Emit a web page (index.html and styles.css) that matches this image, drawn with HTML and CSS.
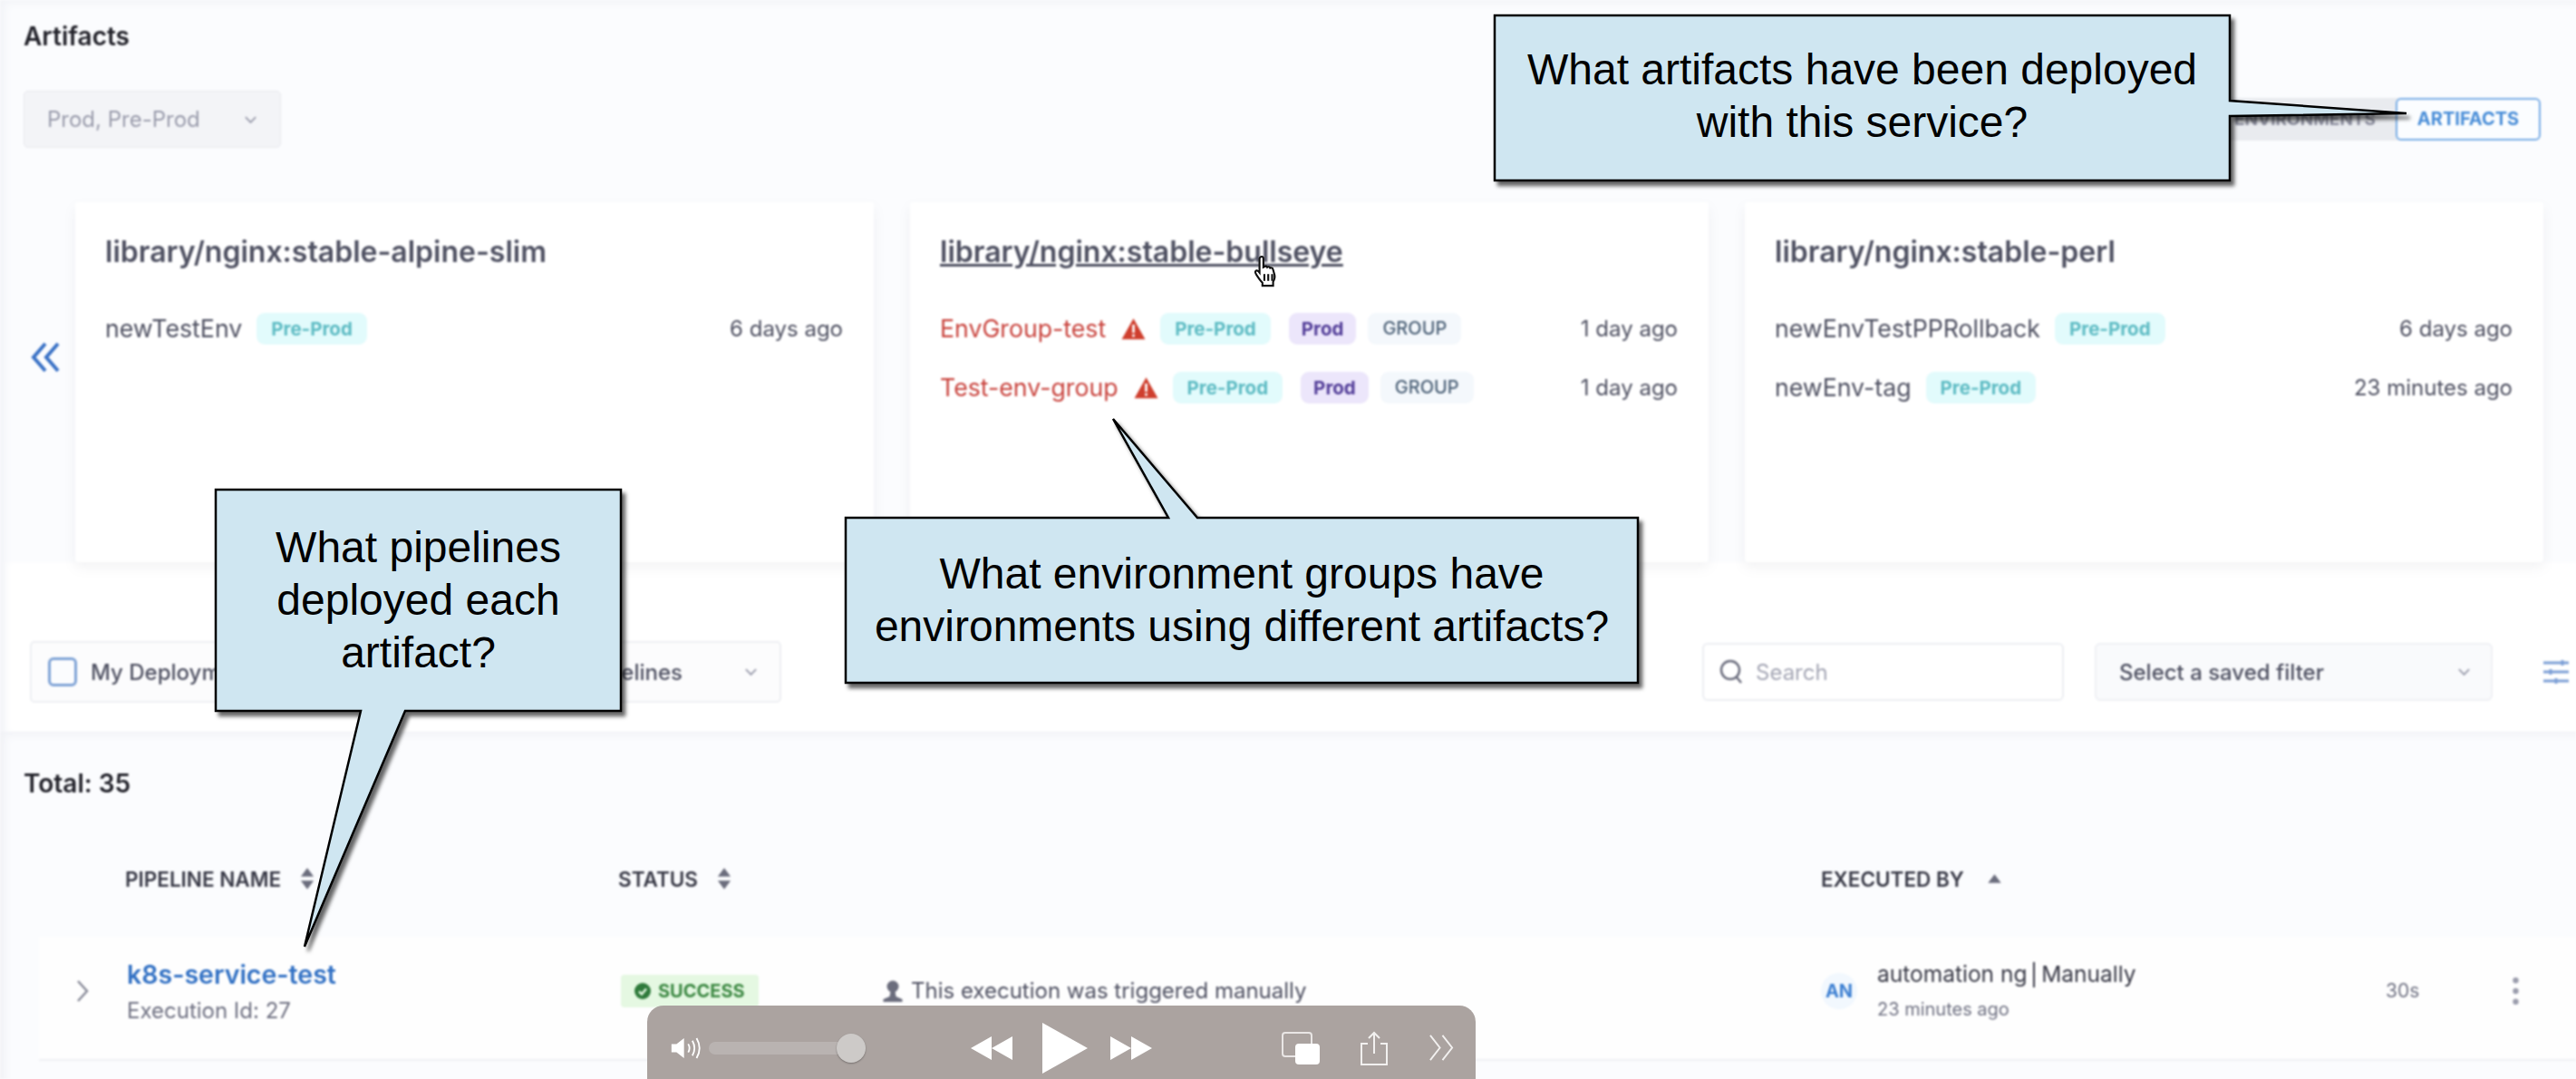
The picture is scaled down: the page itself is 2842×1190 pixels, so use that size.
FILE: index.html
```html
<!DOCTYPE html>
<html lang="en">
<head>
    <meta charset="UTF-8">
    <meta name="viewport" content="width=device-width, initial-scale=1.0">
    <title>Service artifacts</title>
    <link rel="stylesheet" href="styles.css">
</head>
<body>
    <div class="screen">
        <div class="app">
            <section class="artifacts">
                <h2 class="section-title">Artifacts</h2>
                <div class="tool-row">
                    <div class="env-select">
                        <span>Prod, Pre-Prod</span>
                        <svg class="chevron-down" viewBox="0 0 16 10"><path d="M2 2l6 6 6-6"/></svg>
                    </div>
                    <div class="view-toggle">
                        <span class="toggle-off">ENVIRONMENTS</span>
                        <span class="toggle-on">ARTIFACTS</span>
                    </div>
                </div>
                <div class="cards-row">
                    <svg class="page-back" viewBox="0 0 34 34"><path d="M17 2L4 17l13 15M31 2L18 17l13 15"/></svg>
                    <div class="cards">
                        <article class="card">
                            <h3 class="card-title">library/nginx:stable-alpine-slim</h3>
                            <div class="env-row">
                                <span class="env-name">newTestEnv</span>
                                <span class="badge badge-preprod">Pre-Prod</span>
                                <span class="env-time">6 days ago</span>
                            </div>
                        </article>
                        <article class="card">
                            <h3 class="card-title card-title-hover">library/nginx:stable-bullseye</h3>
                            <div class="env-row">
                                <span class="env-name env-name-warn">EnvGroup-test</span>
                                <svg class="warn-icon" viewBox="0 0 24 22"><path d="M12 1L23.500 21.500H.5z"/><rect class="warn-mark" x="10.800" y="7" width="2.400" height="8"/><rect class="warn-mark" x="10.800" y="16.500" width="2.400" height="2.500"/></svg>
                                <span class="badge badge-preprod">Pre-Prod</span>
                                <span class="badge badge-prod">Prod</span>
                                <span class="badge badge-group">GROUP</span>
                                <span class="env-time">1 day ago</span>
                            </div>
                            <div class="env-row">
                                <span class="env-name env-name-warn">Test-env-group</span>
                                <svg class="warn-icon" viewBox="0 0 24 22"><path d="M12 1L23.500 21.500H.5z"/><rect class="warn-mark" x="10.800" y="7" width="2.400" height="8"/><rect class="warn-mark" x="10.800" y="16.500" width="2.400" height="2.500"/></svg>
                                <span class="badge badge-preprod">Pre-Prod</span>
                                <span class="badge badge-prod">Prod</span>
                                <span class="badge badge-group">GROUP</span>
                                <span class="env-time">1 day ago</span>
                            </div>
                        </article>
                        <article class="card">
                            <h3 class="card-title">library/nginx:stable-perl</h3>
                            <div class="env-row">
                                <span class="env-name">newEnvTestPPRollback</span>
                                <span class="badge badge-preprod">Pre-Prod</span>
                                <span class="env-time">6 days ago</span>
                            </div>
                            <div class="env-row">
                                <span class="env-name">newEnv-tag</span>
                                <span class="badge badge-preprod">Pre-Prod</span>
                                <span class="env-time">23 minutes ago</span>
                            </div>
                        </article>
                    </div>
                </div>
            </section>

            <section class="filters">
                <div class="filter-box">
                    <span class="checkbox"></span>
                    <span class="filter-label">My Deployments</span>
                    <span class="filter-pipelines">All Pipelines</span>
                    <svg class="chevron-down" viewBox="0 0 16 10"><path d="M2 2l6 6 6-6"/></svg>
                </div>
                <div class="search-box">
                    <svg class="search-icon" viewBox="0 0 26 28"><circle cx="12" cy="12" r="10"/><path d="M19 20l5 6"/></svg>
                    <span>Search</span>
                </div>
                <div class="saved-filter">
                    <span>Select a saved filter</span>
                    <svg class="chevron-down" viewBox="0 0 16 10"><path d="M2 2l6 6 6-6"/></svg>
                </div>
                <svg class="filter-icon" viewBox="0 0 30 26"><path d="M1 3h28M1 13h28M1 23h28M22 0v6M9 10v6M15 20v6"/></svg>
            </section>

            <section class="results">
                <div class="total">Total: 35</div>
                <div class="table-head">
                    <span></span>
                    <span class="head-cell">PIPELINE NAME <svg class="sort-icon" viewBox="0 0 14 22"><path d="M7 1l6 8H1zM7 21l6-8H1z"/></svg></span>
                    <span class="head-cell">STATUS <svg class="sort-icon" viewBox="0 0 14 22"><path d="M7 1l6 8H1zM7 21l6-8H1z"/></svg></span>
                    <span></span>
                    <span class="head-cell">EXECUTED BY <svg class="sort-up" viewBox="0 0 14 10"><path d="M7 1l6 8H1z"/></svg></span>
                </div>
                <div class="run-row">
                    <svg class="row-expand" viewBox="0 0 14 26"><path d="M2 2l10 11L2 24"/></svg>
                    <div>
                        <div class="run-name">k8s-service-test</div>
                        <div class="run-id">Execution Id: 27</div>
                    </div>
                    <div>
                        <span class="status-badge">
                            <svg class="status-icon" viewBox="0 0 18 18"><circle cx="9" cy="9" r="9"/><path d="M5 9.500l3 3 5-6"/></svg>
                            SUCCESS
                        </span>
                    </div>
                    <div class="trigger">
                        <svg class="user-icon" viewBox="0 0 24 26"><circle cx="12" cy="8" r="6.500"/><path d="M9.500 13h5l1 6 7 3v3H1.500v-3l7-3z"/></svg>
                        This execution was triggered manually
                    </div>
                    <div class="executor">
                        <span class="avatar">AN</span>
                        <div>
                            <div class="executor-name">automation ng <span class="executor-sep"></span> Manually</div>
                            <div class="executor-time">23 minutes ago</div>
                        </div>
                    </div>
                    <div class="run-duration">30s</div>
                    <svg class="run-menu" viewBox="0 0 6 30"><circle cx="3" cy="4" r="3"/><circle cx="3" cy="15" r="3"/><circle cx="3" cy="26" r="3"/></svg>
                </div>
            </section>
        </div>

        <svg class="cursor-hand" viewBox="0 0 28 34"><path d="M9 2.500c1.500-1 3 0 3 1.500v9l1-.5c1-1 2.500-.5 3 .5 1-.8 2.500-.5 3 .7 1-.5 2.500 0 2.800 1.300l1.700 6c.7 3-.3 5-1.500 7v4H11v-3c-2-2-4-5-6-8-1-1.500-2-3-1-4 1-1.200 2.500-.5 4 1.500V4c0-.5.500-1 1-1.500z"/><path d="M13 20v7M17 20v7M21 20v7"/></svg>

        <div class="callout callout-artifacts">
            <svg class="callout-shape" viewBox="0 0 1012 190"><path d="M2 2H813V96L1008 110L813 113V184H2z"/></svg>
            <p>What artifacts have been deployed<br>with this service?</p>
        </div>
        <div class="callout callout-groups">
            <svg class="callout-shape" viewBox="0 -110 880 300"><path d="M2 2H358L297-107L390 2H876V184H2z"/></svg>
            <p>What environment groups have<br>environments using different artifacts?</p>
        </div>
        <div class="callout callout-pipelines">
            <svg class="callout-shape" viewBox="0 0 452 508"><path d="M2 2H449V246H211L100 506L162 246H2z"/></svg>
            <p>What pipelines<br>deployed each<br>artifact?</p>
        </div>

        <div class="player">
            <svg class="player-volume" viewBox="0 0 36 26"><path class="solid" d="M1 8h6l9-7v24l-9-7H1z"/><path d="M21 8q3 5 0 10M26 4q5 9 0 18M31 1q7 12 0 24"/></svg>
            <div class="player-slider"><span class="player-thumb"></span></div>
            <svg class="player-rewind" viewBox="0 0 46 26"><path d="M0 13L23 0v26zM23 13L46 0v26z"/></svg>
            <svg class="player-play" viewBox="0 0 50 56"><path d="M0 0L50 28 0 56z"/></svg>
            <svg class="player-forward" viewBox="0 0 46 26"><path d="M46 13L23 0v26zM23 13L0 0v26z"/></svg>
            <svg class="player-pip" viewBox="0 0 42 36"><rect class="outline" x="1" y="1" width="32" height="26" rx="3"/><rect x="15" y="13" width="27" height="23" rx="4"/></svg>
            <svg class="player-share" viewBox="0 0 32 38"><path d="M9 14H2v23h28V14h-7M16 25V2M10 8l6-6 6 6"/></svg>
            <svg class="player-more" viewBox="0 0 30 30"><path d="M2 1l11 14L2 29M16 1l11 14-11 14"/></svg>
        </div>
    </div>
</body>
</html>
```

FILE: styles.css
```css
body {
    margin: 0;
    font-family: Inter, "Noto Sans", sans-serif;
    color: #4f5162;
    background: #fbfcfe;
}
.screen {
    position: relative;
    width: 2842px;
    height: 1190px;
    overflow: hidden;
}
.app {
    height: 100%;
    filter: blur(0.8px);
}

/* artifacts section */
.artifacts {
    padding: 22px 36px 0 26px;
    background: #fbfcfe;
    box-shadow: inset 10px 8px 8px -4px #f3f4f8;
}
.section-title {
    margin: 0;
    font-size: 28px;
    line-height: 36px;
    font-weight: 600;
    color: #22222a;
}
.tool-row {
    display: flex;
    justify-content: space-between;
    margin-top: 42px;
}
.env-select {
    display: flex;
    align-items: center;
    justify-content: space-between;
    box-sizing: border-box;
    width: 284px;
    height: 63px;
    padding: 0 25px;
    background: #f3f4f7;
    border: 1px solid #e8e9ee;
    border-radius: 5px;
    font-size: 24px;
    color: #9a9cac;
}
.chevron-down {
    width: 15px;
    height: 10px;
    fill: none;
    stroke: #9a9cac;
    stroke-width: 2;
}
.view-toggle {
    display: flex;
    align-items: center;
    height: 47px;
    margin-top: 8px;
    margin-right: 3px;
    background: #e9ebef;
    border-radius: 6px;
    font-size: 19px;
    font-weight: 700;
}
.toggle-off {
    padding: 0 22px;
    color: #8d8f9f;
}
.toggle-on {
    box-sizing: border-box;
    width: 160px;
    height: 47px;
    line-height: 43px;
    text-align: center;
    font-size: 20px;
    color: #4a8ed8;
    background: #fbfdff;
    border: 2px solid #78ade6;
    border-radius: 6px;
}
.cards-row {
    display: flex;
    margin-top: 60px;
    height: 397px;
}
.page-back {
    flex: none;
    width: 34px;
    height: 34px;
    margin-top: 154px;
    margin-left: 7px;
    margin-right: 16px;
    fill: none;
    stroke: #3a72c6;
    stroke-width: 4;
}
.cards {
    flex: 1;
    height: 100%;
    display: grid;
    grid-template-columns: repeat(3, 1fr);
    gap: 40px;
}
.card {
    padding: 37px 34px 0 33px;
    background: #fff;
    box-shadow: 0 6px 14px rgba(96, 97, 112, 0.08);
    border-radius: 3px;
}
.card-title {
    margin: 0 0 46px;
    font-size: 32px;
    line-height: 36px;
    font-weight: 600;
    color: #4f5162;
}
.card-title-hover {
    text-decoration: underline;
}
.env-row {
    display: flex;
    align-items: center;
    height: 40px;
    margin-bottom: 25px;
    font-size: 26.700px;
}
.env-name-warn {
    color: #c9433d;
}
.env-time {
    margin-left: auto;
    font-size: 24px;
}
.warn-icon {
    width: 27px;
    height: 25px;
    margin-left: 17px;
    fill: #cf3f2e;
}
.warn-mark {
    fill: #fff;
}
.badge {
    margin-left: 16px;
    padding: 0 16px;
    line-height: 35px;
    font-size: 20.500px;
    font-weight: 700;
    border-radius: 9px;
}
.badge-preprod {
    color: #5fbcc4;
    background: #e2fbfc;
}
.warn-icon + .badge-preprod {
    margin-left: 16px;
}
.badge-prod {
    margin-left: 20px;
    padding: 0 14px;
    color: #55409a;
    background: #ece6fb;
}
.badge-group {
    margin-left: 13px;
    padding: 0 16px;
    font-size: 20px;
    font-weight: 500;
    color: #4d6278;
    background: #f4f8fc;
}

/* filter bar */
.filters {
    display: flex;
    align-items: center;
    gap: 34px;
    height: 187px;
    box-sizing: border-box;
    padding: 87px 7px 32px 33px;
    background: #fff;
    box-shadow: inset 10px 0 8px -4px #f3f4f8;
}
.filter-box {
    display: flex;
    align-items: center;
    box-sizing: border-box;
    width: 829px;
    height: 68px;
    padding: 0 24px 0 18px;
    margin-right: auto;
    background: #fcfcfd;
    border: 2px solid #eeeff3;
    border-radius: 5px;
    font-size: 24px;
    font-weight: 500;
}
.checkbox {
    box-sizing: border-box;
    width: 32px;
    height: 32px;
    margin-right: 15px;
    background: #fbfcfe;
    border: 3px solid #7fa3d6;
    border-radius: 6px;
}
.filter-pipelines {
    margin-left: auto;
    margin-right: 68px;
}
.search-box {
    display: flex;
    align-items: center;
    gap: 14px;
    box-sizing: border-box;
    width: 399px;
    height: 64px;
    padding-left: 17px;
    background: #fff;
    border: 2px solid #eceef2;
    border-radius: 6px;
    font-size: 24px;
    color: #a5a7b5;
}
.search-icon {
    width: 26px;
    height: 28px;
    fill: none;
    stroke: #6b6d7d;
    stroke-width: 2.500;
}
.saved-filter {
    display: flex;
    align-items: center;
    justify-content: space-between;
    box-sizing: border-box;
    width: 439px;
    height: 64px;
    padding: 0 22px 0 25px;
    background: #f9fafc;
    border: 2px solid #eff0f4;
    border-radius: 6px;
    font-size: 24px;
    font-weight: 500;
}
.filter-icon {
    flex: none;
    width: 30px;
    height: 26px;
    margin-left: 21px;
    fill: none;
    stroke: #7d9fd6;
    stroke-width: 3;
}

/* results table */
.results {
    height: 383px;
    padding-left: 26px;
    box-sizing: border-box;
    background: #fbfcfe;
    box-shadow: inset 10px 8px 8px -4px #f1f2f6;
}
.total {
    padding-top: 39px;
    font-size: 28px;
    line-height: 36px;
    font-weight: 600;
    color: #22222a;
}
.table-head,
.run-row {
    display: grid;
    align-items: center;
}
.table-head {
    grid-template-columns: 112px 544px 318px 1009px 1fr;
    margin-top: 72px;
    height: 30px;
    font-size: 22.500px;
    font-weight: 600;
    color: #383946;
}
.head-cell {
    display: flex;
    align-items: center;
    gap: 20px;
}
.sort-icon {
    width: 18px;
    height: 26px;
    fill: #6b6d7d;
}
.sort-up {
    width: 17px;
    height: 12px;
    margin-left: 5px;
    fill: #6b6d7d;
}
.run-row {
    grid-template-columns: 97px 542px 318px 1009px 623px 143px 1fr;
    margin-left: 17px;
    margin-top: 49px;
    height: 137px;
    box-sizing: border-box;
    padding-bottom: 16px;
    background: #fefefe;
    border-bottom: 2px solid #eff0f4;
}
.row-expand {
    width: 14px;
    height: 26px;
    margin-left: 41px;
    fill: none;
    stroke: #8a8c9a;
    stroke-width: 2.500;
}
.run-name {
    font-size: 28.500px;
    line-height: 40px;
    font-weight: 600;
    color: #3271c4;
}
.run-id {
    margin-top: 5px;
    font-size: 24px;
    line-height: 30px;
    color: #6f7182;
}
.status-badge {
    display: inline-flex;
    align-items: center;
    gap: 8px;
    height: 36px;
    margin-left: 3px;
    padding: 0 15px;
    background: #e5f8e2;
    border-radius: 4px;
    font-size: 20px;
    font-weight: 700;
    color: #3f8a45;
}
.status-icon {
    width: 18px;
    height: 18px;
    fill: #2f7a3b;
}
.status-icon path {
    fill: none;
    stroke: #e5f8e2;
    stroke-width: 2.500;
}
.trigger {
    display: flex;
    align-items: center;
    gap: 8px;
    margin-left: -27px;
    font-size: 24px;
    color: #4f5162;
}
.user-icon {
    width: 24px;
    height: 26px;
    fill: #6b6d7d;
}
.executor {
    display: flex;
    align-items: center;
    gap: 22px;
}
.avatar {
    width: 40px;
    line-height: 40px;
    text-align: center;
    font-size: 20px;
    font-weight: 700;
    color: #3e80d2;
    background: #f2f8fe;
    border-radius: 50%;
}
.executor-name {
    font-size: 24.500px;
    line-height: 34px;
    color: #383946;
}
.executor-sep {
    display: inline-block;
    width: 2px;
    height: 28px;
    vertical-align: -6px;
    background: #383946;
}
.executor-time {
    margin-top: 7px;
    font-size: 20px;
    line-height: 30px;
    color: #6f7182;
}
.run-duration {
    font-size: 21px;
    color: #6f7182;
}
.run-menu {
    width: 7px;
    height: 32px;
    margin-left: -3px;
    fill: #9a9cac;
}

/* overlays: pointer, slide callouts, video controls */
.cursor-hand {
    position: absolute;
    left: 1381px;
    top: 280px;
    width: 30px;
    height: 38px;
    fill: #fff;
    stroke: #111;
    stroke-width: 2;
}
.callout {
    position: absolute;
    display: flex;
    flex-direction: column;
    justify-content: center;
    font-family: "Liberation Sans", Arial, sans-serif;
    font-size: 48px;
    line-height: 58px;
    text-align: center;
    color: #000;
}
.callout p {
    position: relative;
    margin: 0;
}
.callout-shape {
    position: absolute;
    left: 0;
    top: 0;
    fill: #cfe6f1;
    stroke: #000;
    stroke-width: 2.500;
    overflow: visible;
    filter: drop-shadow(4px 5px 2px rgba(0, 0, 0, 0.6));
}
.callout-artifacts {
    left: 1647px;
    top: 15px;
    width: 815px;
    height: 186px;
    padding-bottom: 4px;
    box-sizing: border-box;
}
.callout-artifacts .callout-shape {
    width: 1012px;
    height: 190px;
}
.callout-groups {
    left: 931px;
    top: 569px;
    width: 878px;
    height: 186px;
}
.callout-groups .callout-shape {
    top: -110px;
    width: 880px;
    height: 300px;
}
.callout-pipelines {
    left: 236px;
    top: 538px;
    width: 451px;
    height: 248px;
}
.callout-pipelines .callout-shape {
    width: 452px;
    height: 508px;
}
.player {
    position: absolute;
    left: 714px;
    bottom: 0;
    display: flex;
    align-items: center;
    box-sizing: border-box;
    width: 914px;
    height: 81px;
    padding-top: 12px;
    padding-left: 25px;
    background: #aba3a0;
    border-radius: 18px 18px 0 0;
}
.player svg {
    flex: none;
    fill: #fff;
}
.player-volume {
    width: 35px;
    height: 24px;
}
.player-volume path {
    fill: none;
    stroke: #fff;
    stroke-width: 2;
}
.player-volume .solid {
    fill: #fff;
    stroke: none;
}
.player-slider {
    position: relative;
    width: 173px;
    height: 14px;
    margin-left: 8px;
    background: #b9b3b1;
    border-radius: 7px;
}
.player-thumb {
    position: absolute;
    right: 0;
    top: -9px;
    width: 32px;
    height: 32px;
    background: #cdcac8;
    border-radius: 50%;
    box-shadow: 0 1px 2px rgba(0, 0, 0, 0.3);
}
.player-rewind {
    width: 46px;
    height: 26px;
    margin-left: 116px;
}
.player-play {
    width: 50px;
    height: 56px;
    margin-left: 33px;
}
.player-forward {
    width: 46px;
    height: 26px;
    margin-left: 25px;
}
.player-pip {
    width: 42px;
    height: 36px;
    margin-left: 143px;
}
.player-pip .outline {
    fill: none;
    stroke: #e9e6e5;
    stroke-width: 2;
}
.player-share {
    width: 32px;
    height: 38px;
    margin-left: 44px;
}
.player .player-share {
    fill: none;
    stroke: #f2f0ef;
    stroke-width: 2;
}
.player-more {
    width: 29px;
    height: 29px;
    margin-left: 44px;
}
.player .player-more {
    fill: none;
    stroke: #f2f0ef;
    stroke-width: 2;
}
```
